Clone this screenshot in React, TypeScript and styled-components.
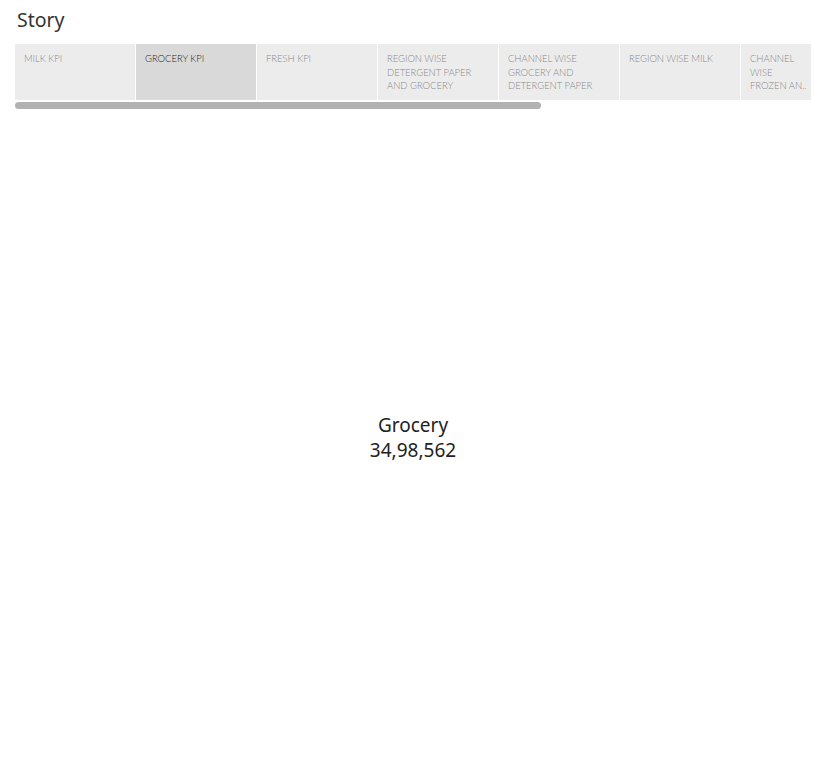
import styled, { createGlobalStyle } from "styled-components";

const GlobalStyle = createGlobalStyle`
  html, body {
    margin: 0;
    padding: 0;
    background: #ffffff;
  }
`;

interface Point {
  title: string;
  active?: boolean;
  narrow?: boolean;
}

const points: Point[] = [
  { title: "MILK KPI" },
  { title: "GROCERY KPI", active: true },
  { title: "FRESH KPI" },
  { title: "REGION WISE DETERGENT PAPER AND GROCERY" },
  { title: "CHANNEL WISE GROCERY AND DETERGENT PAPER" },
  { title: "REGION WISE MILK" },
  { title: "CHANNEL WISE FROZEN\u00a0AN..", narrow: true },
];

const Page = styled.div`
  display: flex;
  flex-direction: column;
  height: 768px;
  width: 835px;
  box-sizing: border-box;
  padding: 0 24px 0 15px;
`;

const Title = styled.h1`
  margin: 0;
  padding: 7px 0 0 2px;
  height: 44px;
  box-sizing: border-box;
  font-family: "Noto Sans", "Open Sans", sans-serif;
  font-weight: 400;
  font-size: 19.5px;
  line-height: 26px;
  color: #333333;
`;

const Navigator = styled.div`
  display: flex;
  flex-direction: column;
  gap: 2px;
`;

const TabStrip = styled.div`
  display: flex;
  gap: 1px;
  overflow: hidden;
`;

const Tab = styled.div<{ $active?: boolean; $narrow?: boolean }>`
  flex: 0 0 ${(p) => (p.$narrow ? "70px" : "120px")};
  height: 56px;
  box-sizing: border-box;
  padding: 8px ${(p) => (p.$narrow ? "0" : "9px")} 0 9px;
  background: ${(p) => (p.$active ? "#d9d9d9" : "#ececec")};
  color: ${(p) => (p.$active ? "#1e1e1e" : "#8a8a8a")};
  font-family: "Lato", "Liberation Sans", sans-serif;
  font-weight: 300;
  font-size: 9.5px;
  line-height: 13.5px;
  letter-spacing: -0.05px;
  overflow: hidden;
`;

const ScrollTrack = styled.div`
  height: 7px;
`;

const ScrollThumb = styled.div`
  width: 526px;
  height: 7px;
  border-radius: 4px;
  background: #b2b2b2;
`;

const View = styled.div`
  flex: 1;
  display: flex;
  flex-direction: column;
  align-items: center;
  justify-content: center;
  padding: 0 0 2px 0;
  font-family: "Noto Sans", "Open Sans", sans-serif;
  font-size: 19px;
  line-height: 25px;
  color: #222222;
`;

const App = () => {
  return (
    <>
      <GlobalStyle />
      <Page>
        <Title>Story</Title>
        <Navigator>
          <TabStrip>
            {points.map((pt) => (
              <Tab key={pt.title} $active={pt.active} $narrow={pt.narrow}>
                {pt.title}
              </Tab>
            ))}
          </TabStrip>
          <ScrollTrack>
            <ScrollThumb />
          </ScrollTrack>
        </Navigator>
        <View>
          <div>Grocery</div>
          <div>34,98,562</div>
        </View>
      </Page>
    </>
  );
};

export default App;
